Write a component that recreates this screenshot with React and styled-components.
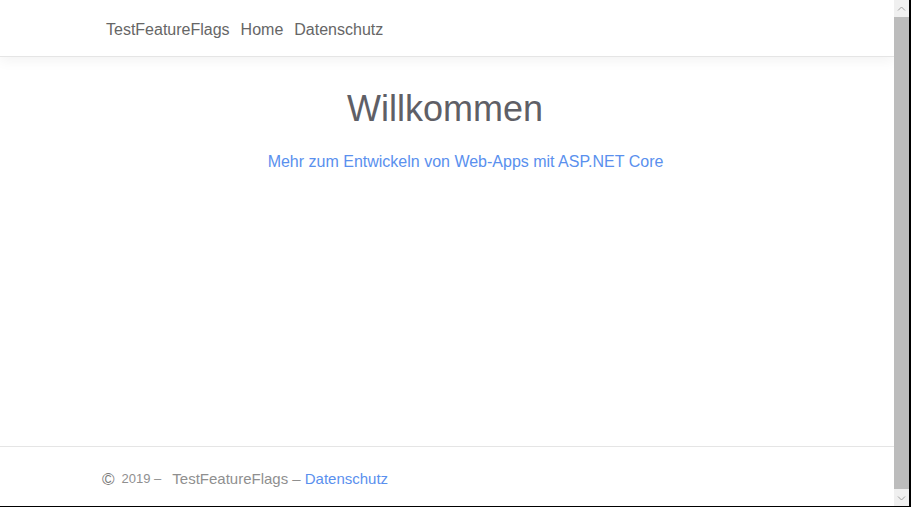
import React from 'react'
import styled, { createGlobalStyle } from 'styled-components'

const GlobalStyle = createGlobalStyle`
    html, body {
        margin: 0;
        padding: 0;
        background: #fff;
        overflow: hidden;
    }
    * {
        box-sizing: border-box;
    }
`

const Frame = styled.div`
    display: flex;
    width: 911px;
    height: 507px;
    border-right: 2px solid #000;
    border-bottom: 1px solid #000;
    font-family: "Liberation Sans", Arial, sans-serif;
`

const Page = styled.div`
    flex: 1;
    display: flex;
    flex-direction: column;
    min-width: 0;
`

const Header = styled.header`
    height: 57px;
    padding-top: 3px;
    border-bottom: 1px solid #e5e5e5;
    box-shadow: 0 4px 12px rgba(0, 0, 0, 0.05);
    display: flex;
    align-items: center;
`

const Container = styled.div`
    width: 720px;
    margin: 0 auto;
    padding: 0 15px;
    display: flex;
    align-items: center;
`

const NavItem = styled.a`
    font-size: 16px;
    color: #666;
    text-decoration: none;
    margin-right: 11px;
    margin-left: ${({ first }) => (first ? '4px' : '0')};
`

const Main = styled.main`
    flex: 1;
    display: flex;
    flex-direction: column;
    align-items: center;
    padding-top: 24px;
`

const Title = styled.h1`
    margin: 0;
    padding-right: 4px;
    font-size: 36px;
    font-weight: 400;
    color: #5f5f66;
    line-height: 56px;
`

const Lead = styled.p`
    margin: 13px 0 0;
    padding-left: 37px;
    font-size: 16px;
    line-height: 24px;
    color: #5a90ee;
`

const Footer = styled.footer`
    height: 60px;
    padding-top: 3px;
    border-top: 1px solid #e5e5e5;
    display: flex;
    align-items: center;
    font-size: 15px;
    color: #8f8f8f;
`

const Copy = styled.span`
    font-size: 17px;
    line-height: 14px;
    margin-top: 4px;
    margin-right: 7px;
    color: #7a7a7a;
`

const Year = styled.span`
    font-size: 13px;
    margin-right: 11px;
`

const FooterLink = styled.a`
    color: #5a90ee;
    text-decoration: none;
    margin-left: 4px;
`

const Scrollbar = styled.div`
    width: 15px;
    display: flex;
    flex-direction: column;
    background: #f0f0f0;
`

const Arrow = styled.div`
    height: 17px;
    display: flex;
    align-items: center;
    justify-content: center;
`

const Thumb = styled.div`
    flex: 1;
    background: #bcbcbc;
`

const Chevron = ({ down }) => (
    <svg width="9" height="6" viewBox="0 0 9 6">
        <path
            d={down ? 'M1 1.5 L4.5 5 L8 1.5' : 'M1 4.5 L4.5 1 L8 4.5'}
            fill="none"
            stroke="#a0a0a0"
            strokeWidth="1"
        />
    </svg>
)

const App = () => {
    return (
        <>
            <GlobalStyle />
            <Frame>
                <Page>
                    <Header>
                        <Container>
                            <NavItem first href="#">TestFeatureFlags</NavItem>
                            <NavItem href="#">Home</NavItem>
                            <NavItem href="#">Datenschutz</NavItem>
                        </Container>
                    </Header>
                    <Main>
                        <Title>Willkommen</Title>
                        <Lead>Mehr zum Entwickeln von Web-Apps mit ASP.NET Core</Lead>
                    </Main>
                    <Footer>
                        <Container>
                            <Copy>©</Copy>
                            <Year>2019 –</Year>
                            TestFeatureFlags –
                            <FooterLink href="#">Datenschutz</FooterLink>
                        </Container>
                    </Footer>
                </Page>
                <Scrollbar>
                    <Arrow><Chevron /></Arrow>
                    <Thumb />
                    <Arrow><Chevron down /></Arrow>
                </Scrollbar>
            </Frame>
        </>
    )
}

export default App
